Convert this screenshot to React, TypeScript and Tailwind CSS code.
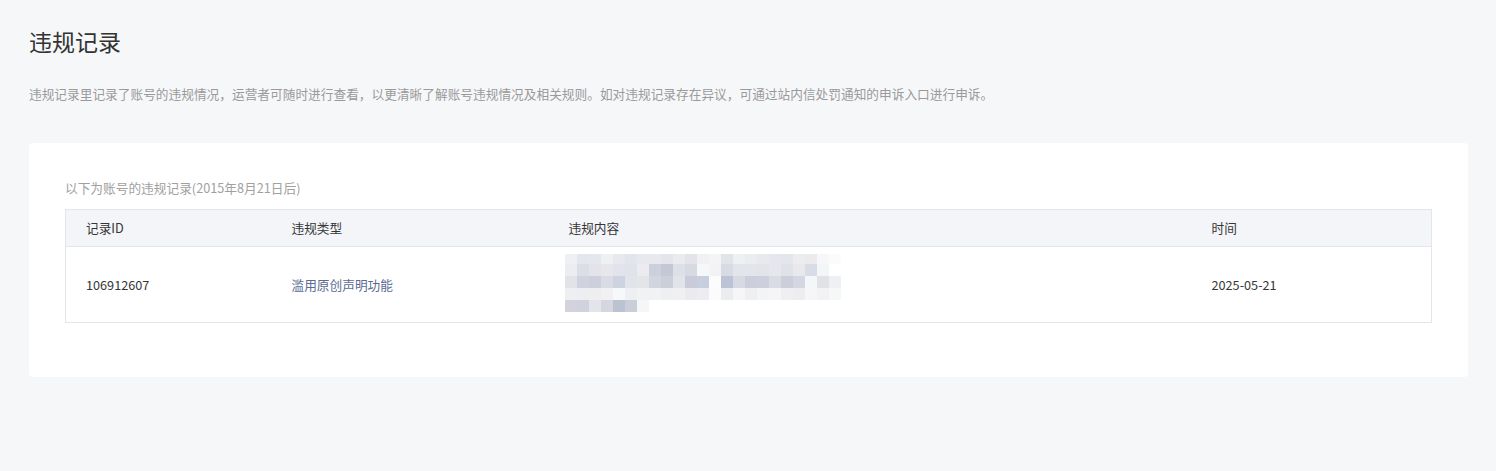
import React from "react";

const font = { fontFamily: '"Noto Sans CJK SC", "Noto Sans", sans-serif' };

// pixelated (blurred) content of the record
const mosaic: string[][] = [
  ["#eef0f3", "#e4e6ed", "#e4e7ee", "#eef0f4", "#e7e9ee", "#e2e5ec", "#e8e9ee", "#e8e9ee", "#e4e5ec", "#eaebef", "#e3e3e9", "#f0f1f4", "#f4f4f6", "#e3e4ea", "#eff0f4", "#ebecf0", "#e8e9ee", "#e6e7ec", "#e4e6ec", "#ecedf0", "#ebebee", "#f7f7f9", "#fbfbfc"],
  ["#ebedf1", "#dcdee7", "#e3e4ea", "#e7e6ea", "#e1e4ed", "#e0e3ea", "#ececf0", "#ccd0dc", "#c4c8d6", "#dde0e8", "#d8dae2", "#f6f7f9", "#f3f3f5", "#d9dbe4", "#e3e5ec", "#e4e5ec", "#e3e4ea", "#e6e7ec", "#e0e2e9", "#e9e9ed", "#d9dce6", "#f4f5f7", "#ffffff"],
  ["#e2e3e9", "#d1d2df", "#ccd0dd", "#d9dce6", "#cdd3e1", "#e3e4ea", "#e4e5e9", "#d2d4df", "#ccced9", "#e3e4e9", "#c9cbd9", "#c7cedd", "#fdfcfc", "#bcc3d7", "#d8dae3", "#cccedb", "#cdd0dc", "#dadce4", "#ccced9", "#d4d7e1", "#f5f6f8", "#e2e2e6", "#eef0f3"],
  ["#eeeff2", "#edeef1", "#eeeef1", "#f1f1f4", "#f7f8f9", "#eeeff2", "#f1f2f4", "#f1f2f4", "#eeeff2", "#f0f0f3", "#ebebef", "#ededf1", "#fbfbfb", "#ebecf0", "#f6f6f8", "#efeff2", "#f3f4f6", "#f5f5f7", "#efeff3", "#ededf0", "#f6f6f8", "#f2f2f4", "#f6f7f8"],
  ["#d2d3de", "#d0d2dd", "#e3e5eb", "#d5d6df", "#bbc3d3", "#c9ced9", "#f6f6f8"],
];

function Mosaic() {
  const rowY = [0, 10, 22, 34, 46];
  const rowH = [10, 12, 12, 12, 12];
  return (
    <svg width={276} height={58} className="block -mt-1">
      {mosaic.map((row, r) =>
        row.map((c, i) => (
          <rect key={`${r}-${i}`} x={i * 12} y={rowY[r]} width={12} height={rowH[r]} fill={c} />
        ))
      )}
    </svg>
  );
}

export default function App() {
  return (
    <div className="min-h-screen bg-[#f6f7f9] px-[29px] pt-[26px] pb-10" style={font}>
      <h1 className="text-[23px] leading-[31px] text-[#333333] font-normal">违规记录</h1>
      <p className="mt-[28px] text-[12.7px] leading-[18px] text-[#9a9a9a]">
        违规记录里记录了账号的违规情况，运营者可随时进行查看，以更清晰了解账号违规情况及相关规则。如对违规记录存在异议，可通过站内信处罚通知的申诉入口进行申诉。
      </p>

      <div className="mt-[40px] w-[1439px] rounded bg-white px-[36px] pt-[36px] pb-[54px]">
        <p className="text-[12.7px] leading-[18px] text-[#a0a0a0]">以下为账号的违规记录(2015年8月21日后)</p>
        <table className="mt-[12px] w-full table-fixed border-collapse border border-[#e4e6eb] text-[12.7px] text-[#353535]">
          <colgroup>
            <col className="w-[206px]" />
            <col className="w-[277px]" />
            <col className="w-[643px]" />
            <col />
          </colgroup>
          <thead>
            <tr className="h-[37px] bg-[#f4f5f9] border-b border-[#e4e6eb]">
              <th className="pl-5 text-left font-normal">记录ID</th>
              <th className="pl-5 text-left font-normal">违规类型</th>
              <th className="pl-5 text-left font-normal">违规内容</th>
              <th className="pl-5 text-left font-normal">时间</th>
            </tr>
          </thead>
          <tbody>
            <tr className="h-[76px]">
              <td className="pl-5">106912607</td>
              <td className="pl-5 text-[#5b6b92]">滥用原创声明功能</td>
              <td className="pl-4">
                <Mosaic />
              </td>
              <td className="pl-5">2025-05-21</td>
            </tr>
          </tbody>
        </table>
      </div>
    </div>
  );
}
